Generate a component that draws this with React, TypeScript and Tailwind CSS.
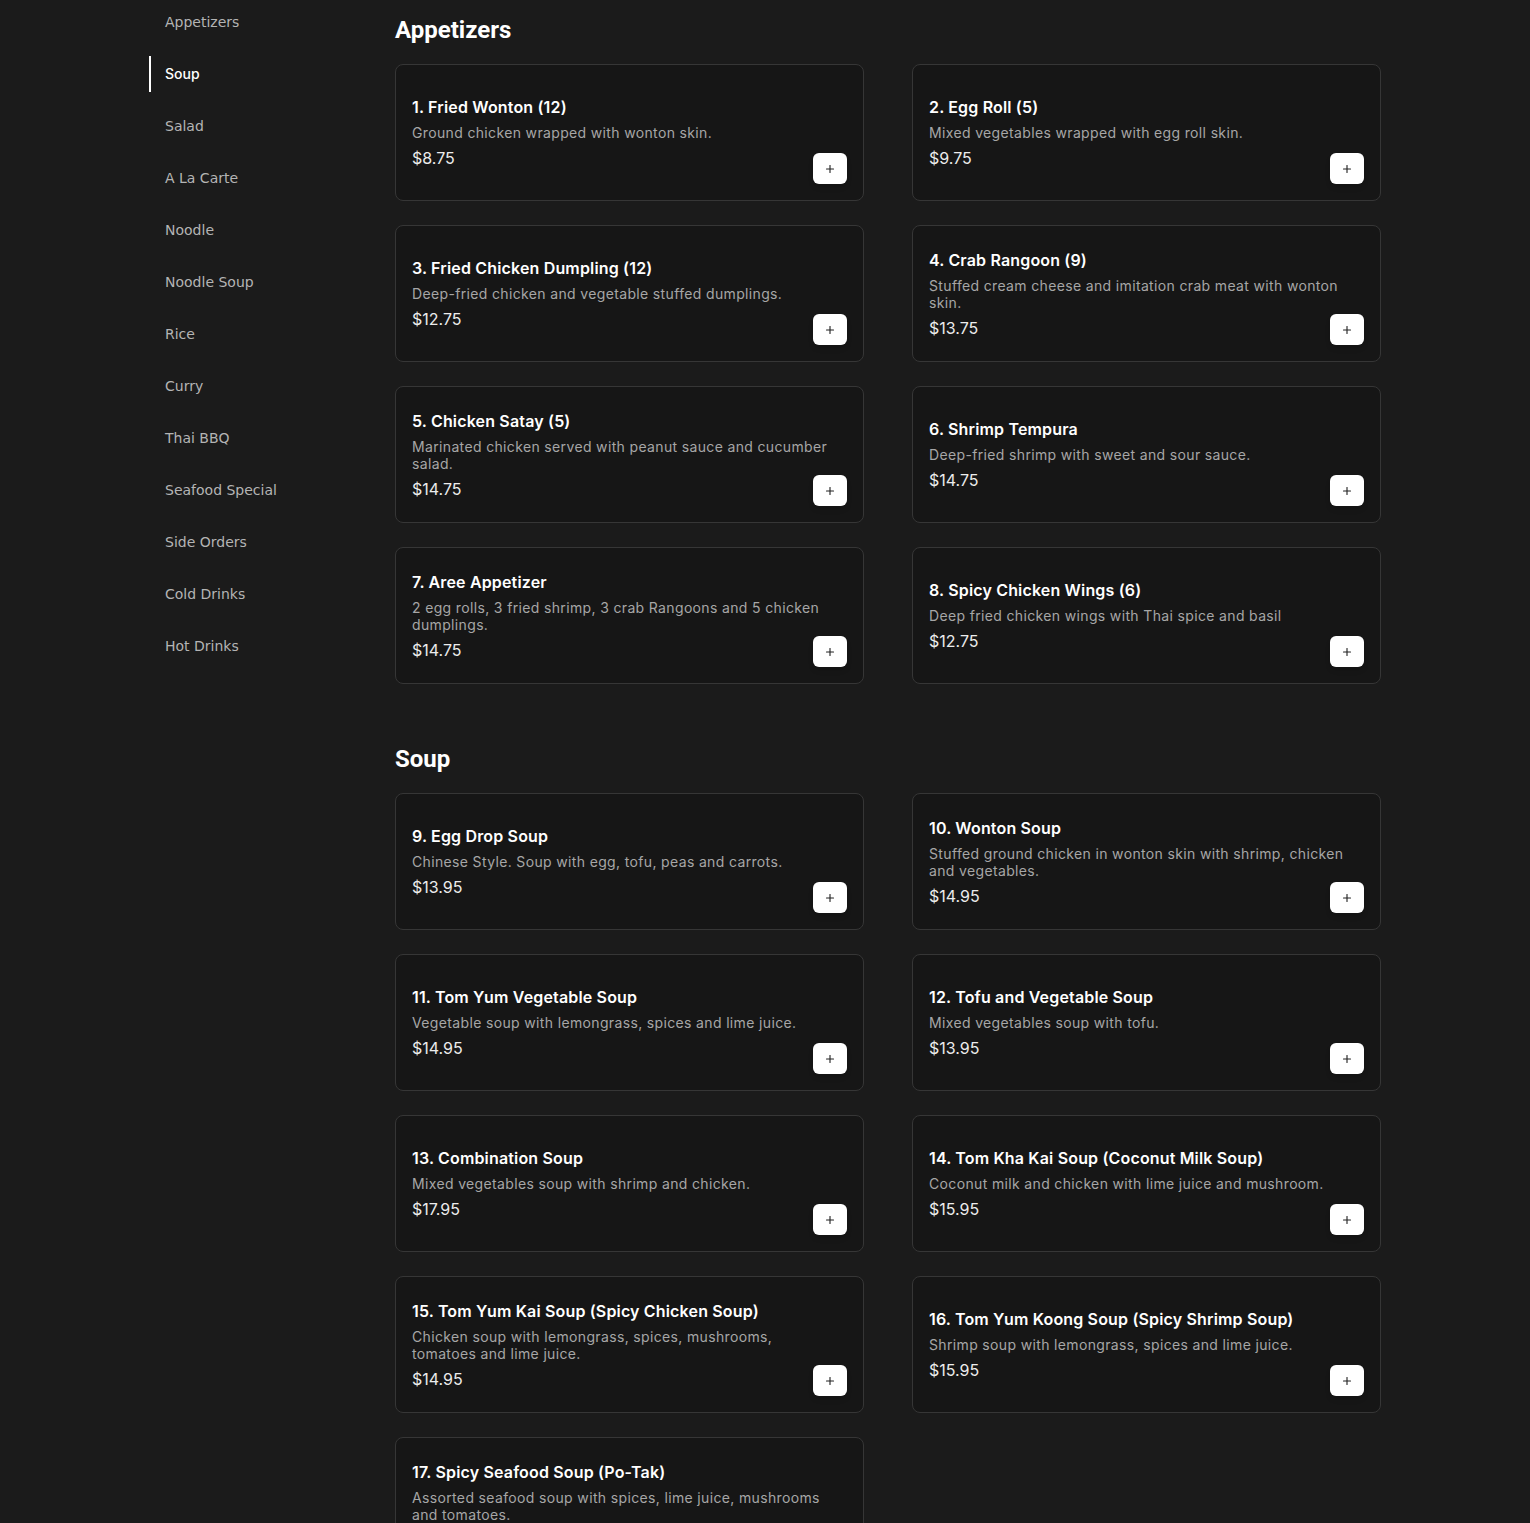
import { Plus } from "lucide-react"

type Item = { name: string; desc: string[]; price: string }

const categories = [
    "Appetizers",
    "Soup",
    "Salad",
    "A La Carte",
    "Noodle",
    "Noodle Soup",
    "Rice",
    "Curry",
    "Thai BBQ",
    "Seafood Special",
    "Side Orders",
    "Cold Drinks",
    "Hot Drinks",
]

const sections: { title: string; items: Item[] }[] = [
    {
        title: "Appetizers",
        items: [
            { name: "1. Fried Wonton (12)", desc: ["Ground chicken wrapped with wonton skin."], price: "$8.75" },
            { name: "2. Egg Roll (5)", desc: ["Mixed vegetables wrapped with egg roll skin."], price: "$9.75" },
            { name: "3. Fried Chicken Dumpling (12)", desc: ["Deep-fried chicken and vegetable stuffed dumplings."], price: "$12.75" },
            { name: "4. Crab Rangoon (9)", desc: ["Stuffed cream cheese and imitation crab meat with wonton", "skin."], price: "$13.75" },
            { name: "5. Chicken Satay (5)", desc: ["Marinated chicken served with peanut sauce and cucumber", "salad."], price: "$14.75" },
            { name: "6. Shrimp Tempura", desc: ["Deep-fried shrimp with sweet and sour sauce."], price: "$14.75" },
            { name: "7. Aree Appetizer", desc: ["2 egg rolls, 3 fried shrimp, 3 crab Rangoons and 5 chicken", "dumplings."], price: "$14.75" },
            { name: "8. Spicy Chicken Wings (6)", desc: ["Deep fried chicken wings with Thai spice and basil"], price: "$12.75" },
        ],
    },
    {
        title: "Soup",
        items: [
            { name: "9. Egg Drop Soup", desc: ["Chinese Style. Soup with egg, tofu, peas and carrots."], price: "$13.95" },
            { name: "10. Wonton Soup", desc: ["Stuffed ground chicken in wonton skin with shrimp, chicken", "and vegetables."], price: "$14.95" },
            { name: "11. Tom Yum Vegetable Soup", desc: ["Vegetable soup with lemongrass, spices and lime juice."], price: "$14.95" },
            { name: "12. Tofu and Vegetable Soup", desc: ["Mixed vegetables soup with tofu."], price: "$13.95" },
            { name: "13. Combination Soup", desc: ["Mixed vegetables soup with shrimp and chicken."], price: "$17.95" },
            { name: "14. Tom Kha Kai Soup (Coconut Milk Soup)", desc: ["Coconut milk and chicken with lime juice and mushroom."], price: "$15.95" },
            { name: "15. Tom Yum Kai Soup (Spicy Chicken Soup)", desc: ["Chicken soup with lemongrass, spices, mushrooms,", "tomatoes and lime juice."], price: "$14.95" },
            { name: "16. Tom Yum Koong Soup (Spicy Shrimp Soup)", desc: ["Shrimp soup with lemongrass, spices and lime juice."], price: "$15.95" },
            { name: "17. Spicy Seafood Soup (Po-Tak)", desc: ["Assorted seafood soup with spices, lime juice, mushrooms", "and tomatoes."], price: "$17.95" },
        ],
    },
]

function MenuCard({ item }: { item: Item }) {
    return (
        <div className="relative h-[137px] rounded-lg border border-[#363636] bg-[#161616] p-4 flex flex-col justify-center">
            <h3 className="text-[16px] leading-6 font-semibold text-white tracking-[0.01em]">{item.name}</h3>
            <p className="mt-[5px] text-[14px] leading-[17px] text-[#a6a6a6] tracking-[0.025em]">
                {item.desc.map((line, i) => (
                    <span key={i} className="block whitespace-nowrap">{line}</span>
                ))}
            </p>
            <p className="mt-[5px] text-[16px] leading-6 text-[#ececec]">{item.price}</p>
            <button className="absolute right-4 bottom-4 w-[34px] h-[31px] rounded-md bg-white flex items-center justify-center shadow-md">
                <Plus className="w-3 h-3 text-[#222]" strokeWidth={2.25} />
            </button>
        </div>
    )
}

export default function App() {
    return (
        <div className="min-h-screen bg-[#1b1b1b]" style={{ fontFamily: "Inter, sans-serif" }}>
            <div className="max-w-7xl mx-auto px-6 flex">
                {/* sidebar */}
                <aside className="w-[246px] shrink-0 pt-1">
                    <nav className="flex flex-col gap-4">
                        {categories.map((c) =>
                            c === "Soup" ? (
                                <div key={c} className="h-9 flex items-center pb-px border-l-2 border-white pl-[14px] text-[14px] font-medium text-white">
                                    {c}
                                </div>
                            ) : (
                                <div
                                    key={c}
                                    className="h-9 flex items-center pl-4 text-[14px] text-[#b4b4b4]"
                                    style={{ fontFamily: '"DejaVu Sans", sans-serif' }}
                                >
                                    {c}
                                </div>
                            )
                        )}
                    </nav>
                </aside>

                {/* menu */}
                <main className="flex-1 pt-[14px] pb-16">
                    {sections.map((s, idx) => (
                        <section key={s.title} className={idx > 0 ? "mt-[59px]" : ""}>
                            <h2
                                className="text-2xl leading-8 font-bold text-white mb-[18px]"
                                style={{ fontFamily: "Roboto, sans-serif" }}
                            >
                                {s.title}
                            </h2>
                            <div className="grid grid-cols-2 gap-x-12 gap-y-6">
                                {s.items.map((item) => (
                                    <MenuCard key={item.name} item={item} />
                                ))}
                            </div>
                        </section>
                    ))}
                </main>
            </div>
        </div>
    )
}
